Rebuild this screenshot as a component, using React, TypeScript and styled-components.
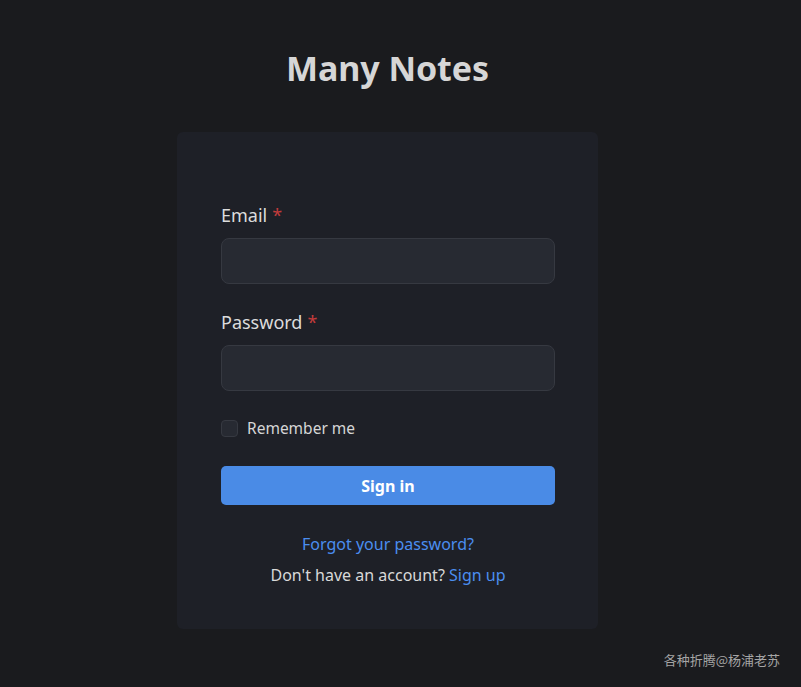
import React from "react";
import styled, { createGlobalStyle } from "styled-components";

const Global = createGlobalStyle`
  html, body { margin: 0; padding: 0; background: #1a1b1e; }
  body { font-family: "Noto Sans", "Open Sans", sans-serif; color: #d9d9d9; }
  * { box-sizing: border-box; }
`;

const Page = styled.div`
  min-height: 687px;
  display: flex;
  flex-direction: column;
  align-items: center;
  padding: 46px 26px 0 0;
  position: relative;
`;

const Title = styled.h1`
  margin: 0;
  font-size: 34px;
  line-height: 44px;
  font-weight: 700;
  color: #d6d6d6;
  letter-spacing: -0.1px;
`;

const Card = styled.form`
  margin-top: 42px;
  width: 421px;
  background: #1e2027;
  border-radius: 6px;
  padding: 70px 43px 42px 44px;
  display: flex;
  flex-direction: column;
`;

const Field = styled.div`
  display: flex;
  flex-direction: column;
  gap: 9px;
  margin-bottom: ${(p: { $mb: number }) => p.$mb}px;
`;

const Label = styled.label`
  font-size: 18px;
  line-height: 27px;
  color: #dcdcdc;
`;

const Star = styled.span`
  color: #c23b3b;
  margin-left: 5px;
`;

const Input = styled.input`
  height: 46px;
  width: 100%;
  background: #272a32;
  border: 1px solid #363941;
  border-radius: 8px;
  outline: none;
  color: #ddd;
  font-size: 16px;
  padding: 0 12px;
`;

const CheckRow = styled.label`
  display: flex;
  align-items: center;
  gap: 9px;
  font-size: 15.5px;
  line-height: 18px;
  color: #d6d6d6;
  margin-bottom: 29px;
`;

const Box = styled.span`
  width: 17px;
  height: 17px;
  border-radius: 4px;
  background: #272a32;
  border: 1px solid #363941;
`;

const Button = styled.button`
  height: 39px;
  width: 100%;
  border: none;
  border-radius: 5px;
  background: #4a8be6;
  color: #fff;
  font-family: inherit;
  font-size: 16px;
  font-weight: 700;
  margin-bottom: 27px;
`;

const Center = styled.div`
  text-align: center;
  font-size: 16px;
  line-height: 24px;
  color: #d9d9d9;
  margin-bottom: ${(p: { $mb: number }) => p.$mb}px;
`;

const Link = styled.a`
  color: #4b8ef0;
  text-decoration: none;
`;

const Watermark = styled.div`
  position: absolute;
  right: 21px;
  bottom: 18px;
  font-family: "Noto Sans CJK SC", sans-serif;
  font-size: 13px;
  color: #a5a5a5;
`;

export default function App() {
  return (
    <>
      <Global />
      <Page>
        <Title>Many Notes</Title>
        <Card onSubmit={(e) => e.preventDefault()}>
          <Field $mb={25}>
            <Label>
              Email<Star>*</Star>
            </Label>
            <Input type="email" />
          </Field>
          <Field $mb={28}>
            <Label>
              Password<Star>*</Star>
            </Label>
            <Input type="password" />
          </Field>
          <CheckRow>
            <Box />
            Remember me
          </CheckRow>
          <Button type="submit">Sign in</Button>
          <Center $mb={7}>
            <Link href="#">Forgot your password?</Link>
          </Center>
          <Center $mb={0}>
            Don't have an account? <Link href="#">Sign up</Link>
          </Center>
        </Card>
        <Watermark>各种折腾@杨浦老苏</Watermark>
      </Page>
    </>
  );
}
